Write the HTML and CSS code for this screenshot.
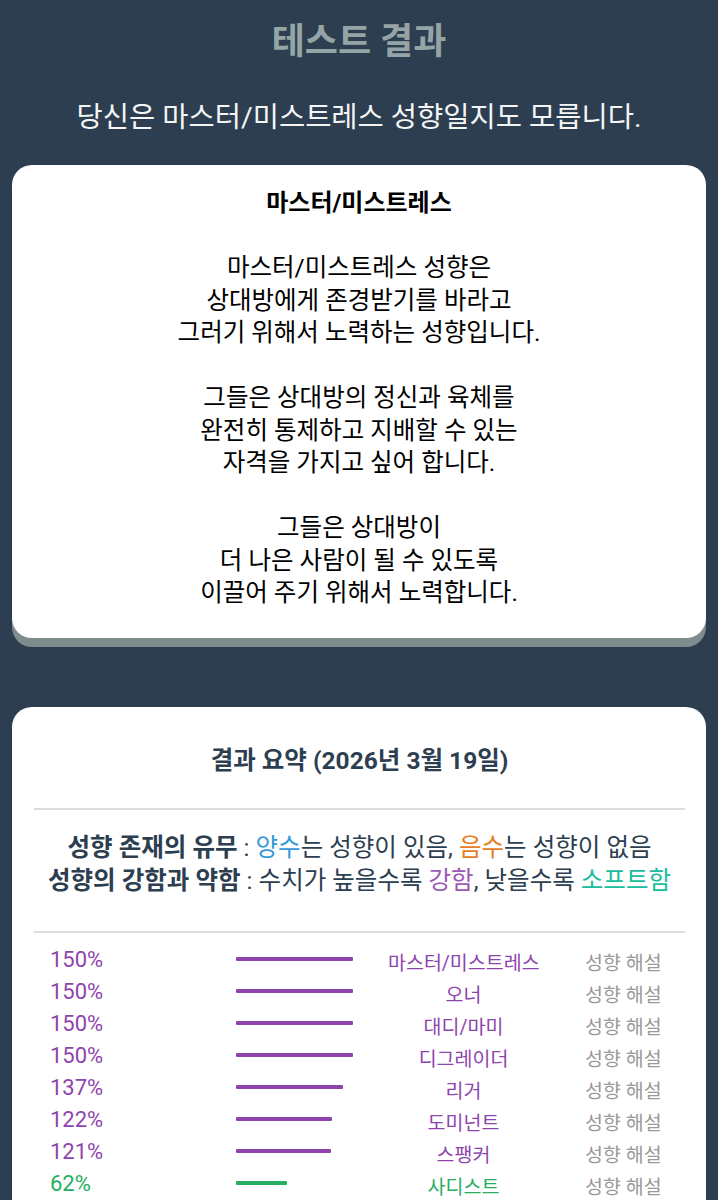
FILE: index.html
```html
<!DOCTYPE html>
<html lang="ko">
<head>
<meta charset="utf-8">
<title>테스트 결과</title>
<link rel="stylesheet" href="styles.css">
</head>
<body>
<header class="head">
  <h1 class="page-title">테스트 결과</h1>
  <p class="subtitle">당신은 마스터/미스트레스 성향일지도 모릅니다.</p>
</header>

<section class="card card-desc">
  <h2 class="desc-title">마스터/미스트레스</h2>
  <p class="desc-text">마스터/미스트레스 성향은<br>상대방에게 존경받기를 바라고<br>그러기 위해서 노력하는 성향입니다.<br><br>그들은 상대방의 정신과 육체를<br>완전히 통제하고 지배할 수 있는<br>자격을 가지고 싶어 합니다.<br><br>그들은 상대방이<br>더 나은 사람이 될 수 있도록<br>이끌어 주기 위해서 노력합니다.</p>
</section>

<section class="card card-summary">
  <h2 class="sum-title">결과 요약 (2026년 3월 19일)</h2>
  <hr class="rule">
  <div class="legend">
    <p><b>성향 존재의 유무</b> : <span class="c-blue">양수</span>는 성향이 있음, <span class="c-orange">음수</span>는 성향이 없음</p>
    <p><b>성향의 강함과 약함</b> : 수치가 높을수록 <span class="c-purple">강함</span>, 낮을수록 <span class="c-teal">소프트함</span></p>
  </div>
  <hr class="rule rule-2">
  <div class="rows">
    <div class="row"><span class="pct">150%</span><span class="bar-cell"><span class="bar" style="width:117px"></span></span><span class="name">마스터/미스트레스</span><span class="more">성향 해설</span></div>
    <div class="row"><span class="pct">150%</span><span class="bar-cell"><span class="bar" style="width:117px"></span></span><span class="name">오너</span><span class="more">성향 해설</span></div>
    <div class="row"><span class="pct">150%</span><span class="bar-cell"><span class="bar" style="width:117px"></span></span><span class="name">대디/마미</span><span class="more">성향 해설</span></div>
    <div class="row"><span class="pct">150%</span><span class="bar-cell"><span class="bar" style="width:117px"></span></span><span class="name">디그레이더</span><span class="more">성향 해설</span></div>
    <div class="row"><span class="pct">137%</span><span class="bar-cell"><span class="bar" style="width:107px"></span></span><span class="name">리거</span><span class="more">성향 해설</span></div>
    <div class="row"><span class="pct">122%</span><span class="bar-cell"><span class="bar" style="width:96px"></span></span><span class="name">도미넌트</span><span class="more">성향 해설</span></div>
    <div class="row"><span class="pct">121%</span><span class="bar-cell"><span class="bar" style="width:95px"></span></span><span class="name">스팽커</span><span class="more">성향 해설</span></div>
    <div class="row row-green"><span class="pct">62%</span><span class="bar-cell"><span class="bar" style="width:51px"></span></span><span class="name">사디스트</span><span class="more">성향 해설</span></div>
  </div>
</section>
</body>
</html>
```

FILE: styles.css
```css
* { box-sizing: border-box; }
html, body {
  margin: 0;
  padding: 0;
}
body {
  background: #2c3e50;
  font-family: Roboto, "Noto Sans CJK KR", sans-serif;
  color: #000;
  overflow: hidden;
  height: 1200px;
}
.head {
  text-align: center;
  padding-top: 22px;
}
.page-title {
  margin: 0;
  font-size: 36px;
  line-height: 40px;
  font-weight: 700;
  color: #95a5a6;
}
.subtitle {
  margin: 38px 0 0;
  font-size: 28.5px;
  line-height: 36px;
  color: #f4f6f6;
}
.card {
  background: #fff;
  margin: 0 12px;
  border-radius: 20px;
}
.card-desc {
  margin-top: 29px;
  padding: 23px 16px 28px;
  text-align: center;
  box-shadow: 0 9px 0 #7f8c8d;
}
.desc-title {
  margin: 0;
  font-size: 24px;
  line-height: 30px;
  font-weight: 700;
}
.desc-text {
  margin: 34px 0 0;
  font-size: 24.5px;
  line-height: 32.5px;
}
.card-summary {
  margin-top: 69px;
  padding: 39px 21px 40px 22px;
}
.sum-title {
  margin: 0;
  text-align: center;
  font-size: 24.5px;
  line-height: 30px;
  font-weight: 700;
  color: #2c3e50;
}
.rule {
  border: 0;
  border-top: 2px solid #dcdcdc;
  margin: 32px 0 0;
  height: 0;
}
.legend {
  margin-top: 21px;
  text-align: center;
  color: #2c3e50;
  font-size: 24.5px;
  line-height: 33px;
  white-space: nowrap;
}
.legend p { margin: 0; }
.legend b { font-weight: 700; }
.c-blue { color: #3498db; }
.c-orange { color: #e67e22; }
.c-purple { color: #9b59b6; }
.c-teal { color: #1abc9c; }
.rule-2 { margin-top: 34px; }
.rows {
  margin-top: 13px;
  padding-left: 16px;
}
.row {
  display: grid;
  grid-template-columns: 186px 152px 151px auto;
  align-items: center;
  height: 32px;
  color: #8e44ad;
  font-size: 19.5px;
}
.pct {
  font-size: 22px;
  margin-top: -5px;
}
.bar-cell {
  display: flex;
  align-items: center;
  margin-top: -6px;
}
.bar {
  display: block;
  height: 4px;
  background: #8e44ad;
  border-radius: 1px;
}
.name {
  text-align: center;
  white-space: nowrap;
}
.more {
  margin-left: 46px;
  color: #999;
  white-space: nowrap;
}
.row-green { color: #27ae60; }
.row-green .bar { background: #27ae60; }
```
